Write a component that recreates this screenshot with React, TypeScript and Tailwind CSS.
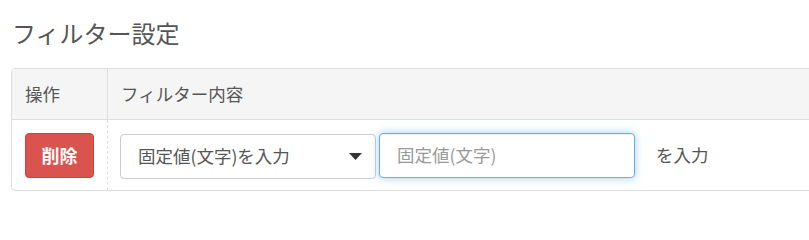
import React from "react";

export default function App() {
  return (
    <div
      className="w-[809px] h-[210px] overflow-hidden bg-white text-[#555]"
      style={{ fontFamily: '"Noto Sans CJK JP", "Noto Sans", sans-serif' }}
    >
      <div className="pl-[11px] pt-[18px]">
        <h2 className="text-[24px] leading-[30px] text-[#555] font-normal pl-[1px]">フィルター設定</h2>
        <div className="mt-[20px] w-[840px] border border-[#ddd] rounded-[4px] overflow-hidden">
          <div className="flex h-[51px] bg-[#f5f5f5] border-b border-[#ddd] text-[17.5px]">
            <div className="w-[96px] border-r border-[#ddd] flex items-center pl-[13px]">操作</div>
            <div className="flex-1 flex items-center pl-[13px]">フィルター内容</div>
          </div>
          <div className="flex h-[70px]">
            <div className="w-[96px] border-r border-dashed border-[#ddd] flex items-center pl-[13px]">
              <button className="w-[69px] h-[45px] bg-[#d9534f] border border-[#d43f3a] rounded-[4px] text-white font-bold text-[18px] leading-none">
                削除
              </button>
            </div>
            <div className="flex-1 flex items-center pl-[12px] text-[17.5px]">
              <div className="mt-[2px] w-[256px] h-[45px] border border-[#ccc] rounded-[4px] bg-white flex items-center justify-between pl-[17px] pr-[13px] text-[#555]">
                <span>固定値(文字)を入力</span>
                <svg width="13" height="7" viewBox="0 0 13 7">
                  <polygon points="0,0 13,0 6.5,7" fill="#333" />
                </svg>
              </div>
              <div className="ml-[3px] w-[256px] h-[45px] border border-[#66afe9] rounded-[4px] bg-white flex items-center pl-[17px] text-[#999] shadow-[inset_0_1px_1px_rgba(0,0,0,0.075),0_0_8px_rgba(102,175,233,0.6)]">
                固定値(文字)
              </div>
              <span className="ml-[21px] text-[#555]">を入力</span>
            </div>
          </div>
        </div>
      </div>
    </div>
  );
}
